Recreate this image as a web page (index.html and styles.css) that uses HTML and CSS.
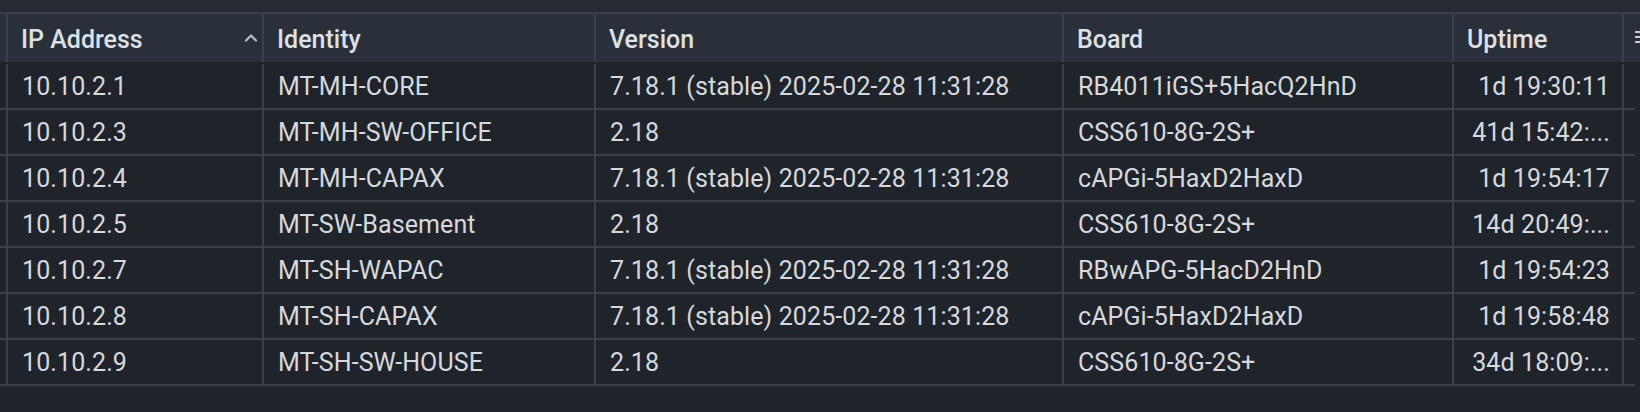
FILE: index.html
```html
<!DOCTYPE html>
<html lang="en">
<head>
<meta charset="utf-8">
<title>Devices</title>
<link rel="stylesheet" href="styles.css">
</head>
<body>
<div class="topstrip"></div>
<div class="grid">
  <div class="head">
    <div class="cell hcell sorted"><span>IP Address</span>
      <svg class="caret" width="14" height="9" viewBox="0 0 14 9"><polyline points="2,7.5 7,2.5 12,7.5" fill="none" stroke="#b9bec6" stroke-width="2.2" stroke-linecap="round" stroke-linejoin="round"/></svg>
    </div>
    <div class="cell hcell">Identity</div>
    <div class="cell hcell">Version</div>
    <div class="cell hcell">Board</div>
    <div class="cell hcell last">Uptime</div>
    <div class="menu"><span></span><span></span><span></span></div>
  </div>
  <div class="row">
    <div class="cell">10.10.2.1</div><div class="cell">MT-MH-CORE</div><div class="cell">7.18.1 (stable) 2025-02-28 11:31:28</div><div class="cell">RB4011iGS+5HacQ2HnD</div><div class="cell num last">1d 19:30:11</div>
  </div>
  <div class="row">
    <div class="cell">10.10.2.3</div><div class="cell">MT-MH-SW-OFFICE</div><div class="cell">2.18</div><div class="cell">CSS610-8G-2S+</div><div class="cell num last">41d 15:42:...</div>
  </div>
  <div class="row">
    <div class="cell">10.10.2.4</div><div class="cell">MT-MH-CAPAX</div><div class="cell">7.18.1 (stable) 2025-02-28 11:31:28</div><div class="cell">cAPGi-5HaxD2HaxD</div><div class="cell num last">1d 19:54:17</div>
  </div>
  <div class="row">
    <div class="cell">10.10.2.5</div><div class="cell">MT-SW-Basement</div><div class="cell">2.18</div><div class="cell">CSS610-8G-2S+</div><div class="cell num last">14d 20:49:...</div>
  </div>
  <div class="row">
    <div class="cell">10.10.2.7</div><div class="cell">MT-SH-WAPAC</div><div class="cell">7.18.1 (stable) 2025-02-28 11:31:28</div><div class="cell">RBwAPG-5HacD2HnD</div><div class="cell num last">1d 19:54:23</div>
  </div>
  <div class="row">
    <div class="cell">10.10.2.8</div><div class="cell">MT-SH-CAPAX</div><div class="cell">7.18.1 (stable) 2025-02-28 11:31:28</div><div class="cell">cAPGi-5HaxD2HaxD</div><div class="cell num last">1d 19:58:48</div>
  </div>
  <div class="row">
    <div class="cell">10.10.2.9</div><div class="cell">MT-SH-SW-HOUSE</div><div class="cell">2.18</div><div class="cell">CSS610-8G-2S+</div><div class="cell num last">34d 18:09:...</div>
  </div>
</div>
</body>
</html>
```

FILE: styles.css
```css
html, body {
  margin: 0;
  padding: 0;
  background: #1f242b;
  width: 1640px;
  height: 412px;
  overflow: hidden;
  font-family: Roboto, Inter, "Noto Sans", sans-serif;
  color: #d5d8dd;
}

.topstrip {
  height: 12px;
  background: #272c34;
  border-bottom: 2px solid #3a4049;
}

.grid {
  display: flex;
  flex-direction: column;
}

.head {
  display: flex;
  height: 48px;
  padding-left: 6px;
  background: #2a3039;
  border-bottom: 2px solid #1f242b;
  overflow: hidden;
}

.row {
  display: flex;
  width: 1629px;
  height: 44px;
  padding-left: 6px;
  box-sizing: content-box;
  border-bottom: 2px solid #3a4049;
}

.cell {
  flex-shrink: 0;
  box-sizing: border-box;
  display: flex;
  align-items: center;
  padding: 0 14px;
  border-left: 2px solid #3a4049;
  font-size: 25px;
  letter-spacing: 0.1px;
  white-space: nowrap;
  overflow: hidden;
}

.cell:nth-child(1) { width: 256px; }
.cell:nth-child(2) { width: 332px; }
.cell:nth-child(3) { width: 468px; }
.cell:nth-child(4) { width: 390px; }
.cell:nth-child(5) { width: 172px; }

.cell.last {
  border-right: 2px solid #3a4049;
}

.hcell {
  font-weight: 500;
  color: #dde0e4;
  padding-left: 13px;
  letter-spacing: 0;
  padding-top: 2px;
}

.sorted {
  justify-content: space-between;
  padding-right: 4px;
}

.caret {
  display: block;
  margin-top: -4px;
}

.num {
  justify-content: flex-end;
  padding-right: 12px;
}

.menu {
  flex-shrink: 0;
  display: flex;
  flex-direction: column;
  gap: 3px;
  margin-left: 11px;
  margin-top: 17px;
}

.menu span {
  display: block;
  width: 12px;
  height: 2px;
  background: #c9cdd3;
}
```
